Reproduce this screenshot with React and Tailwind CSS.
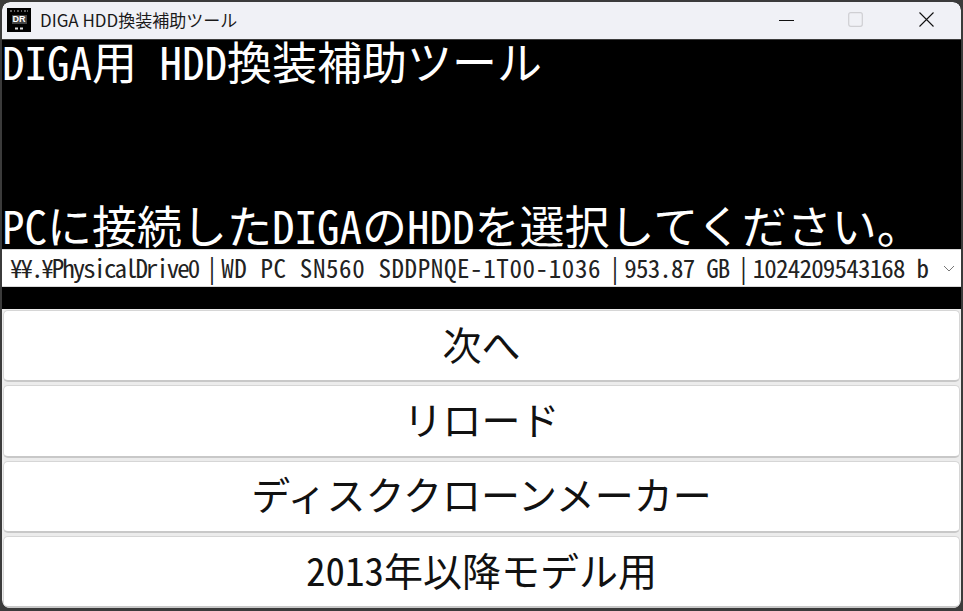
import React from 'react';

const jp = 'font-["Noto_Sans_CJK_JP",sans-serif] [font-feature-settings:"hwid"]';

const buttons = ['次へ', 'リロード', 'ディスククローンメーカー', '2013年以降モデル用'];

const AppIcon = () => (
  <div className="mb-[2px] flex h-6 w-6 flex-col items-center justify-between bg-black py-[2px]">
    <svg width="20" height="3" viewBox="0 0 20 3">
      <path d="M1 1h2M5 1h1M8 1h2M12 1h1M15 1h2M18 1h1" stroke="#bbb" strokeWidth="1" />
    </svg>
    <span className="bg-[#444] px-[1px] font-['Liberation_Sans',sans-serif] text-[9px] leading-[9px] font-bold text-white [font-feature-settings:normal]">DR</span>
    <svg width="10" height="3" viewBox="0 0 10 3">
      <path d="M1 1.5h3M6 1.5h3" stroke="#ddd" strokeWidth="2" />
    </svg>
  </div>
);

const TitleBar = () => (
  <div className="flex h-[37px] shrink-0 items-center rounded-t-[8px] bg-[#f0f1f6] pl-[5px]">
    <AppIcon />
    <span className="mb-[2px] ml-[9px] font-['Noto_Sans_CJK_JP',sans-serif] text-[17px] text-[#1a1a1a] [font-feature-settings:normal]">DIGA HDD換装補助ツール</span>
    <div className="mb-[2px] ml-auto flex items-center">
      <div className="flex w-[46px] justify-center">
        <svg width="15" height="16" viewBox="0 0 15 16"><path d="M0 8.5h15" stroke="#111" strokeWidth="1" /></svg>
      </div>
      <div className="ml-[23px] flex w-[46px] justify-center">
        <svg width="15" height="15" viewBox="0 0 15 15"><rect x="0.7" y="0.7" width="13.6" height="13.6" rx="2" fill="none" stroke="#cfcfd3" strokeWidth="1.2" /></svg>
      </div>
      <div className="mr-[12px] ml-[25px] flex w-[46px] justify-center">
        <svg width="15" height="15" viewBox="0 0 15 15"><path d="M0.5 0.5l14 14M14.5 0.5l-14 14" stroke="#111" strokeWidth="1.1" /></svg>
      </div>
    </div>
  </div>
);

export default function App() {
  return (
    <div className="h-[611px] w-[963px] overflow-hidden bg-[#3b3b3b] pt-[2px] pr-[2px] pb-[3px] pl-[2px]">
      <div className={`flex h-full flex-col overflow-hidden rounded-[8px] bg-black ${jp}`}>
        <TitleBar />
        <div className="h-[1px] shrink-0 bg-[#3d3d3d]" />
        <div className="h-[209px] shrink-0 text-[45px] leading-[41px] whitespace-pre-line text-white">
          {'DIGA用 HDD換装補助ツール\n\n\n\nPCに接続したDIGAのHDDを選択してください。'}
        </div>
        <div className="relative flex h-[38px] shrink-0 items-center justify-between border-y border-[#d9d9d9] bg-white pr-[5px] pl-[8px]">
          <span className="text-[25px] whitespace-nowrap text-[#222]">
            <span className="tracking-[-2.05px]">¥¥.¥PhysicalDrive0</span>
            <span className="tracking-[-4.8px]"> | </span>
            <span className="tracking-[0.6px]">WD PC SN560 SDDPNQE-1T00-1036</span>
            <span className="tracking-[-4.8px]"> | </span>
            <span className="tracking-[-0.8px]">953.87 GB</span>
            <span className="tracking-[-4.8px]"> | </span>
            <span className="tracking-[-0.8px]">1024209543168 b</span>
          </span>
          <svg width="14" height="14" viewBox="0 0 14 14"><path d="M2 5l5 5 5-5" fill="none" stroke="#777" strokeWidth="1" /></svg>
        </div>
        <div className="flex flex-1 flex-col gap-[3px] bg-black pt-[22px]">
          <div className="flex flex-1 flex-col gap-[3px] bg-[#ececec] pt-[1px] pr-[1px] pl-[1px]">
            {buttons.map((label) => (
              <button key={label} className="flex-1 rounded-[5px] border border-b-2 border-[#d6d6d6] border-b-[#c8c8c8] bg-white pb-[5px] text-[39px] text-[#111]">
                {label}
              </button>
            ))}
          </div>
        </div>
      </div>
    </div>
  );
}
